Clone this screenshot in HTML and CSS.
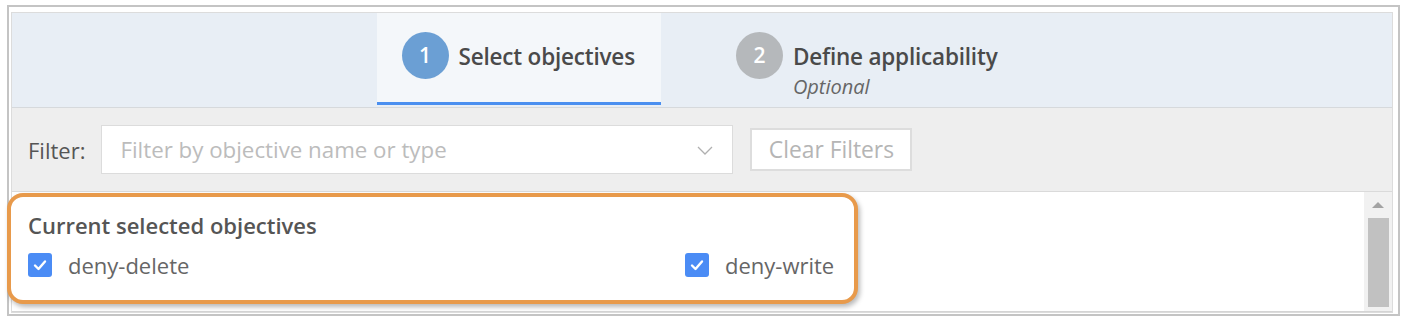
FILE: index.html
```html
<!DOCTYPE html>
<html lang="en">
<head>
  <meta charset="UTF-8">
  <meta name="viewport" content="width=device-width, initial-scale=1.0">
  <title>Select objectives</title>
  <link rel="stylesheet" href="styles.css">
</head>
<body>
  <div class="frame">
    <div class="panel">
      <div class="steps">
        <div class="step active">
          <div class="step-num">1</div>
          <div class="step-text">
            <div class="step-title">Select objectives</div>
          </div>
        </div>
        <div class="step">
          <div class="step-num">2</div>
          <div class="step-text">
            <div class="step-title">Define applicability</div>
            <div class="step-sub">Optional</div>
          </div>
        </div>
      </div>

      <div class="filter-bar">
        <label class="filter-label">Filter:</label>
        <div class="filter-input">
          <span class="placeholder">Filter by objective name or type</span>
          <svg class="chevron" width="16" height="11" viewBox="0 0 16 11">
            <polyline points="1,2 8,9 15,2" fill="none" stroke="#b0b0b0" stroke-width="1.3"/>
          </svg>
        </div>
        <button class="clear-btn">Clear Filters</button>
      </div>

      <div class="content">
        <div class="list">
          <div class="selected">
            <div class="selected-title">Current selected objectives</div>
            <div class="selected-items">
              <div class="item">
                <span class="check">
                  <svg width="16" height="16" viewBox="0 0 16 16"><polyline points="3,8.5 6.5,12 13,4.5" fill="none" stroke="#fff" stroke-width="2.4" stroke-linecap="round" stroke-linejoin="round"/></svg>
                </span>
                <span>deny-delete</span>
              </div>
              <div class="item">
                <span class="check">
                  <svg width="16" height="16" viewBox="0 0 16 16"><polyline points="3,8.5 6.5,12 13,4.5" fill="none" stroke="#fff" stroke-width="2.4" stroke-linecap="round" stroke-linejoin="round"/></svg>
                </span>
                <span>deny-write</span>
              </div>
            </div>
          </div>
        </div>
        <div class="scrollbar">
          <div class="arrow"></div>
          <div class="thumb"></div>
        </div>
      </div>
    </div>
  </div>
</body>
</html>
```

FILE: styles.css
```css
body {
  margin: 0;
  padding: 0;
  background-color: #ffffff;
  font-family: "Open Sans", Arial, sans-serif;
  color: #555;
}

.frame {
  margin: 5px 7px 0 7px;
  height: 311px;
  box-sizing: border-box;
  border: 2px solid #c4c4c4;
  padding: 5px 5px 1px 2px;
  background-color: #fff;
}

.panel {
  height: 100%;
  box-sizing: border-box;
  border: 1px solid #dcdcdc;
  display: flex;
  flex-direction: column;
}

/* steps header */
.steps {
  height: 94px;
  flex-shrink: 0;
  display: flex;
  justify-content: center;
  gap: 50px;
  background-color: #e8eef5;
  border-bottom: 1px solid #d6d9dc;
  padding-right: 4px;
}

.step {
  display: flex;
  align-items: flex-start;
  padding: 19px 26px 0 25px;
  height: 91px;
  box-sizing: border-box;
}

.step.active {
  background-color: #f4f7fa;
  border-bottom: 3px solid #4a8ff0;
  height: 92px;
}

.step-num {
  width: 47px;
  height: 47px;
  border-radius: 50%;
  background-color: #b5b8bb;
  color: #fff;
  font-size: 21px;
  font-weight: 600;
  line-height: 47px;
  text-align: center;
}

.step.active .step-num {
  background-color: #6b9fd4;
}

.step-text {
  margin-left: 10px;
}

.step-title {
  font-size: 22.5px;
  font-weight: 600;
  line-height: 49px;
  color: #4a4a4a;
  letter-spacing: -0.2px;
}

.step-sub {
  font-size: 20px;
  font-style: italic;
  color: #666;
  line-height: 22px;
  margin-top: -5px;
}

/* filter bar */
.filter-bar {
  height: 83px;
  flex-shrink: 0;
  display: flex;
  align-items: center;
  background-color: #eeeeee;
  border-bottom: 1px solid #dadada;
  padding-left: 16px;
}

.filter-label {
  font-size: 22px;
  color: #555;
  margin-right: 16px;
}

.filter-input {
  width: 632px;
  height: 49px;
  box-sizing: border-box;
  background-color: #fff;
  border: 1px solid #dcdcdc;
  display: flex;
  align-items: center;
  justify-content: space-between;
  padding: 0 19px 0 18px;
}

.placeholder {
  font-size: 22.3px;
  color: #bcbcbc;
}

.chevron {
  margin-top: 1px;
}

.clear-btn {
  margin-left: 17px;
  width: 162px;
  height: 43px;
  background-color: #fff;
  border: 2px solid #dddddd;
  font-family: "Open Sans", Arial, sans-serif;
  font-size: 22.8px;
  color: #b5b5b5;
  padding: 0;
}

/* content */
.content {
  flex: 1;
  display: flex;
  background-color: #fff;
  border-bottom: 1px solid #d4d4d4;
}

.list {
  flex: 1;
}

.selected {
  margin: 1px 0 0 -5px;
  width: 851px;
  height: 111px;
  box-sizing: border-box;
  border: 4px solid #e89a4b;
  border-radius: 16px;
  box-shadow: 2px 3px 5px rgba(0, 0, 0, 0.28);
  background-color: #fff;
  padding: 14px 0 0 17px;
  position: relative;
}

.selected-title {
  font-size: 22px;
  font-weight: 600;
  color: #555;
  line-height: 28px;
}

.selected-items {
  display: grid;
  grid-template-columns: 657px 1fr;
  margin-top: 14px;
}

.item {
  display: flex;
  align-items: center;
  font-size: 22px;
  color: #666;
  height: 24px;
}

.check {
  width: 24px;
  height: 24px;
  border-radius: 3px;
  background-color: #4b8cf5;
  display: flex;
  align-items: center;
  justify-content: center;
  margin-right: 16px;
}

.scrollbar {
  width: 28px;
  background-color: #f1f1f1;
  display: flex;
  flex-direction: column;
  align-items: center;
}

.arrow {
  margin-top: 10px;
  width: 0;
  height: 0;
  border-left: 6px solid transparent;
  border-right: 6px solid transparent;
  border-bottom: 6px solid #a3a3a3;
}

.thumb {
  margin-top: 10px;
  width: 21px;
  height: 89px;
  background-color: #c1c1c1;
}
```
